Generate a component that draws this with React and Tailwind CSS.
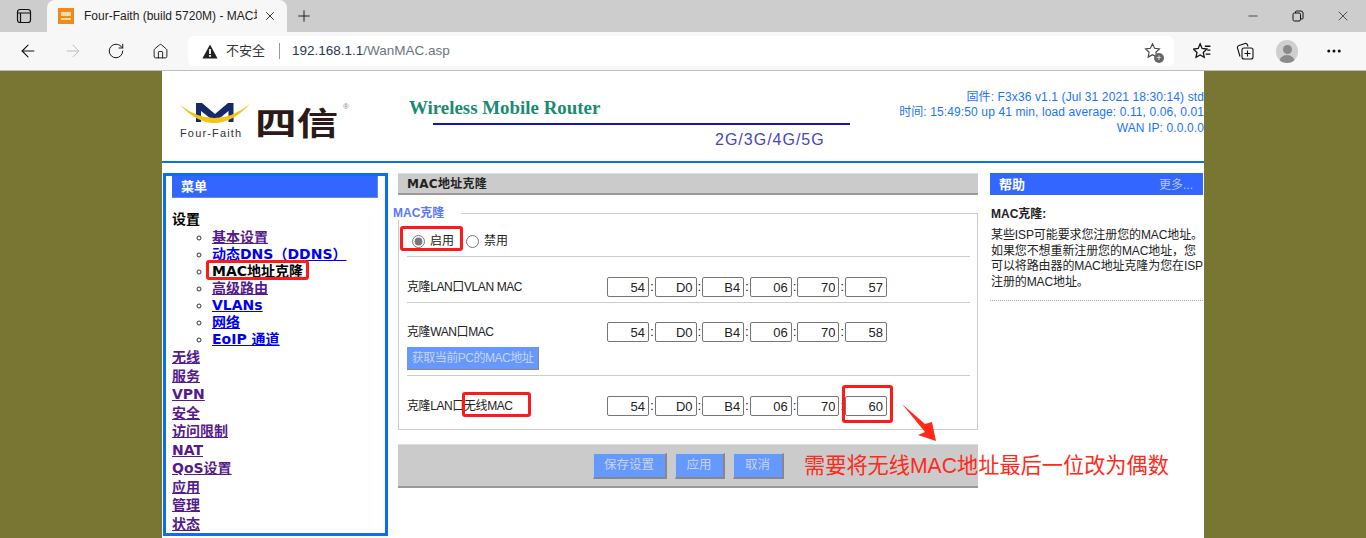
import React from "react";
import { ArrowLeft, ArrowRight, RotateCw, House, Minus, X, Plus, Ellipsis } from "lucide-react";

const sans = "font-['Liberation_Sans','Noto_Sans_CJK_SC',sans-serif]";
const menuFont = "font-['DejaVu_Sans','Noto_Sans_CJK_SC',sans-serif]";

const subMenu = [
  { label: "基本设置", color: "text-[#551a8b]" },
  { label: "动态DNS（DDNS）", color: "text-[#0000ee]" },
  { label: "MAC地址克隆", color: "text-black", current: true },
  { label: "高级路由", color: "text-[#551a8b]" },
  { label: "VLANs", color: "text-[#0000ee]" },
  { label: "网络", color: "text-[#0000ee]" },
  { label: "EoIP 通道", color: "text-[#0000ee]" },
];

const topMenu = ["无线", "服务", "VPN", "安全", "访问限制", "NAT", "QoS设置", "应用", "管理", "状态"];

const Chrome = () => {
  return (
    <div className={`${sans} h-[71px] border-b border-[#bdbdbd]`}>
      <div className="relative flex h-[32px] items-end bg-[#cdcdcd]">
        <div className="flex h-[32px] w-[47px] items-center justify-center">
          <svg width="16" height="16" viewBox="0 0 16 16" fill="none" stroke="#111" strokeWidth="1.2">
            <rect x="1.5" y="1.5" width="13" height="13" rx="2.5" />
            <path d="M1.5 5h13M4.5 5v9.5" />
          </svg>
        </div>
        <div className="flex h-[32px] w-[240px] items-center rounded-t-lg bg-[#f7f7f7] pl-[11px]">
          <div className="flex h-[16px] w-[16px] flex-col items-center justify-center gap-[2px] bg-[#f08a1c]">
            <div className="h-[4px] w-[10px] bg-[#fbd9a8]" />
            <div className="h-[2px] w-[10px] bg-[#fbd9a8]" />
          </div>
          <div className="ml-[10px] w-[173px] overflow-hidden text-[12px] whitespace-nowrap text-[#222]">Four-Faith (build 5720M) - MAC地址克隆</div>
          <X size={14} strokeWidth={1.6} className="ml-[6px] text-[#222]" />
        </div>
        <div className="flex h-[32px] w-[34px] items-center justify-center">
          <Plus size={18} strokeWidth={1.2} className="text-[#111]" />
        </div>
        <div className="ml-auto flex h-[32px] items-center">
          <div className="flex w-[45px] justify-center"><Minus size={14} strokeWidth={1.2} className="text-[#111]" /></div>
          <div className="flex w-[45px] justify-center">
            <svg width="12" height="12" viewBox="0 0 12 12" fill="none" stroke="#111" strokeWidth="1">
              <rect x="1" y="3" width="7.5" height="8" rx="1.5" />
              <path d="M3.500 3V2a1 1 0 0 1 1-1h4.500a2 2 0 0 1 2 2v5a1 1 0 0 1-1 1H8.500" />
            </svg>
          </div>
          <div className="flex w-[46px] justify-center pr-[1px]"><X size={16} strokeWidth={1} className="text-[#111]" /></div>
        </div>
      </div>
      <div className="flex h-[38px] items-center bg-[#f7f7f7]">
        <div className="flex w-[188px] items-center">
          <div className="flex w-[56px] justify-center"><ArrowLeft size={20} strokeWidth={1.3} className="text-[#111]" /></div>
          <div className="flex w-[34px] justify-center"><ArrowRight size={20} strokeWidth={1.2} className="text-[#bbb]" /></div>
          <div className="flex w-[52px] justify-center"><RotateCw size={18} strokeWidth={1.3} className="text-[#111]" /></div>
          <div className="flex w-[36px] justify-center"><House size={17} strokeWidth={1.3} className="text-[#111]" /></div>
        </div>
        <div className="flex h-[30px] w-[986px] items-center rounded-md bg-white pl-[14px]">
          <svg width="16" height="15" viewBox="0 0 16 15">
            <path d="M8 .5 15.600 14.500H.4Z" fill="#222" />
            <rect x="7.100" y="5" width="1.800" height="5" fill="#fff" />
            <rect x="7.100" y="11" width="1.800" height="1.800" fill="#fff" />
          </svg>
          <span className="ml-[8px] text-[13px] text-[#333]">不安全</span>
          <span className="ml-[14px] h-[16px] w-px bg-[#999]" />
          <span className="ml-[12px] text-[13.500px] text-[#1f3a4d]">192.168.1.1</span>
          <span className="text-[13.500px] text-[#6b7580]">/WanMAC.asp</span>
          <div className="relative mr-[12px] ml-auto h-[18px] w-[18px]">
            <svg width="17" height="17" viewBox="0 0 24 24" fill="none" stroke="#444" strokeWidth="1.6">
              <path d="M12 2.500l3 6.300 6.800.9-5 4.800 1.300 6.800-6.100-3.300-6.100 3.300 1.300-6.800-5-4.800 6.800-.9z" />
            </svg>
            <div className="absolute right-[-2px] bottom-[-3px] flex h-[10px] w-[10px] items-center justify-center rounded-full bg-[#666] text-[9px] leading-none text-white">+</div>
          </div>
        </div>
        <div className="flex h-[30px] flex-1 items-center">
          <div className="flex w-[56px] justify-center">
            <svg width="19" height="18" viewBox="0 0 24 22" fill="none" stroke="#111" strokeWidth="1.6">
              <path d="M9 2l2.500 5.800 6 .7-4.500 4.300 1.200 6.200-5.200-3-5.200 3 1.200-6.200L.6 8.500l6-.7z" />
              <path d="M15 5h7M18 10h4M16 15h6" />
            </svg>
          </div>
          <div className="flex w-[30px] justify-center">
            <svg width="18" height="18" viewBox="0 0 18 18" fill="none" stroke="#111" strokeWidth="1.1">
              <rect x="6" y="6" width="11" height="11" rx="2" />
              <path d="M11.500 8.500v6M8.500 11.500h6" />
              <path d="M4 14.500 1.500 6a2 2 0 0 1 1.500-2.500L9 1.500a2 2 0 0 1 2.500 1.500l.5 1.500" />
            </svg>
          </div>
          <div className="ml-[16px] flex h-[23px] w-[22px] flex-col items-center justify-end overflow-hidden rounded-full bg-[#cfcfcf]">
            <div className="h-[9px] w-[9px] rounded-full bg-[#8a8a8a]" />
            <div className="mt-[1px] h-[8px] w-[16px] rounded-t-full bg-[#8a8a8a]" />
          </div>
          <div className="ml-[24px] flex w-[24px] justify-center"><Ellipsis size={18} strokeWidth={2} className="text-[#111]" /></div>
        </div>
      </div>
    </div>
  );
};

const Header = () => {
  return (
    <div className={`${sans} flex h-[92px] border-b-2 border-[#0a70e8]`}>
      <div className="w-[247px] pt-[32px] pl-[18px]">
        <div className="flex items-start">
          <div className="w-[75px]">
            <svg width="70" height="22" viewBox="0 0 70 22" className="block">
              <path d="M16 0h6l13 11L48 0h5.500v19h-5V8L35 19 21 8v11h-5Z" fill="#152a66" />
              <path d="M0 2Q35 38.500 70 1 35 28.500 0 2Z" fill="#f3c316" />
            </svg>
            <div className="mt-[3px] text-[11px] leading-[10px] tracking-[1.150px] whitespace-nowrap text-[#333]">Four-Faith</div>
          </div>
          <div className="mt-[2px] h-[32px] w-[85px] origin-left scale-x-[1.3] font-['Noto_Sans_CJK_SC',sans-serif] text-[32px] leading-[32px] font-bold whitespace-nowrap text-[#2b1a17]">四信</div>
          <div className="ml-[3px] text-[8px] leading-[8px] text-[#888]">®</div>
        </div>
      </div>
      <div className="w-[441px]">
        <div className="pt-[26px] font-['Liberation_Serif',serif] text-[18.900px] leading-[22px] font-bold text-[#1a8a72]">Wireless Mobile Router</div>
        <div className="mt-[4px] ml-[24px] h-[2px] bg-[#1c14b0]" />
        <div className="mt-[6px] pl-[306px] text-[16px] leading-[18px] tracking-[1px] text-[#4545c0]">2G/3G/4G/5G</div>
      </div>
      <div className="flex-1 overflow-hidden pt-[19px] text-right text-[12px] leading-[15.400px] tracking-[0.115px] whitespace-nowrap text-[#1a73ff]">
        <div>固件: F3x36 v1.1 (Jul 31 2021 18:30:14) std</div>
        <div>时间: 15:49:50 up 41 min, load average: 0.11, 0.06, 0.01</div>
        <div>WAN IP: 0.0.0.0</div>
      </div>
    </div>
  );
};

const Sidebar = () => {
  return (
    <div className={`${menuFont} ml-px h-[363px] w-[225px] border-[3px] border-[#0a70e8] px-[6px]`}>
      <div className="h-[22px] w-[206px] border-r border-b border-[#6f86d8] bg-[#3366ff] pl-[9px] text-[13px] leading-[21px] font-bold text-white">菜单</div>
      <div className="pt-[12px] text-[14px] font-bold">
        <div className="leading-[19px] text-black">设置</div>
        <ul className="list-[circle] pl-[40px] text-[14px] leading-[17px]">
          {subMenu.map((item) => (
            <li key={item.label} className="text-[#333]">
              {item.current ? (
                <span className={item.color}>{item.label}</span>
              ) : (
                <a className={`${item.color} underline`}>{item.label}</a>
              )}
            </li>
          ))}
        </ul>
        <div>
          {topMenu.map((item) => (
            <div key={item} className="h-[18.500px] leading-[18px]">
              <a className="text-[#551a8b] underline">{item}</a>
            </div>
          ))}
        </div>
      </div>
    </div>
  );
};

const MacRow = ({ values }) => {
  return (
    <div className="flex items-center">
      {values.map((value, index) => (
        <React.Fragment key={index}>
          {index > 0 && <span className="w-[5.600px] text-center text-[12px] leading-none text-black">:</span>}
          <input
            readOnly
            value={value}
            className="h-[20px] w-[42px] rounded-[2px] border border-[#767676] bg-white pr-[3px] text-right text-[13px] leading-none text-[#222] outline-none"
          />
        </React.Fragment>
      ))}
    </div>
  );
};

const Field = ({ label, values }) => {
  return (
    <div className="flex h-[20px] items-center">
      <div className="w-[200px] text-[12px] tracking-[-0.4px] whitespace-nowrap text-[#222]">{label}</div>
      <MacRow values={values} />
    </div>
  );
};

const saveButton = "h-[26px] border-t border-r-2 border-b-2 border-l border-t-[#bcd] border-r-[#888] border-b-[#888] border-l-[#bcd] bg-[#6699ff] text-[12.500px] text-[#c6d4f0]";

const Main = () => {
  return (
    <div className={`${sans} ml-[10px] w-[580px]`}>
      <div className={`${menuFont} h-[22px] border-t border-b-2 border-t-[#ddd] border-b-[#999] bg-[#cbcbcb] pl-[9px] text-[12px] leading-[21px] font-bold tracking-[0.3px] text-[#222]`}>MAC地址克隆</div>
      <fieldset className="mt-[11px] h-[224px] border border-[#ccc] pr-[7px] pl-[8px]">
        <legend className="-ml-[14px] pr-[17px] text-[12px] leading-[14px] font-bold text-[#5a78ff]">MAC克隆</legend>
        <div className="flex h-[37px] items-start border-b border-[#ccc] pt-[12px] text-[12px] text-[#222]">
          <label className="ml-[5px] flex items-center">
            <input type="radio" name="clone" defaultChecked className="h-[13px] w-[13px] accent-[#777]" />
            <span className="ml-[5px]">启用</span>
          </label>
          <label className="ml-[12px] flex items-center">
            <input type="radio" name="clone" className="h-[13px] w-[13px]" />
            <span className="ml-[5px]">禁用</span>
          </label>
        </div>
        <div className="h-[46px] border-b border-[#ccc] pt-[20px]">
          <Field label="克隆LAN口VLAN MAC" values={["54", "D0", "B4", "06", "70", "57"]} />
        </div>
        <div className="h-[73px] border-b border-[#ccc] pt-[19px]">
          <Field label="克隆WAN口MAC" values={["54", "D0", "B4", "06", "70", "58"]} />
          <button className="mt-[5px] block h-[23px] w-[132px] border-r border-b border-[#888] bg-[#6699ff] text-[12px] tracking-[-0.5px] text-[#c6d4f0]">获取当前PC的MAC地址</button>
        </div>
        <div className="pt-[20px]">
          <Field label="克隆LAN口无线MAC" values={["54", "D0", "B4", "06", "70", "60"]} />
        </div>
      </fieldset>
      <div className="mt-[14px] flex h-[44px] items-center justify-center gap-[8px] border-t border-b-2 border-t-[#ddd] border-b-[#999] bg-[#cbcbcb]">
        <button className={`${saveButton} w-[74px]`}>保存设置</button>
        <button className={`${saveButton} w-[50px]`}>应用</button>
        <button className={`${saveButton} w-[51px]`}>取消</button>
      </div>
    </div>
  );
};

const Help = () => {
  return (
    <div className={`${sans} ml-[12px] w-[213px]`}>
      <div className="flex h-[22px] items-center justify-between bg-[#3366ff] pt-[1px] pr-[10px] pl-[9px] text-[12px]">
        <span className="text-[13px] font-bold text-white">帮助</span>
        <span className="text-[#b5c6f5]">更多...</span>
      </div>
      <div className="border-b border-dotted border-[#aaa] pt-[11px] pb-[9px] pl-px text-[12px] text-[#222]">
        <div className="leading-[16px] font-bold">MAC克隆:</div>
        <p className="mt-[6px] leading-[15.700px] tracking-[-0.1px] whitespace-nowrap">
          某些ISP可能要求您注册您的MAC地址。<br />
          如果您不想重新注册您的MAC地址，您<br />
          可以将路由器的MAC地址克隆为您在ISP<br />
          注册的MAC地址。
        </p>
      </div>
    </div>
  );
};

// red markup drawn on top of the screenshot
const Annotations = () => {
  const box = "absolute rounded-[3px] border-[3px] border-[#ff1a1a]";
  return (
    <>
      <div className={`${box} top-[260px] left-[206px] h-[20px] w-[103px]`} />
      <div className={`${box} top-[226px] left-[400px] h-[25px] w-[63px]`} />
      <div className={`${box} top-[392px] left-[462px] h-[25px] w-[69px]`} />
      <div className={`${box} top-[385px] left-[842px] h-[38px] w-[51px]`} />
      <svg width="40" height="42" viewBox="0 0 40 42" className="absolute top-[402px] left-[900px]">
        <path d="M2 2 25 22 32 20 36 39 18 33 25 30Z" fill="#ff2a1a" />
      </svg>
      <div className={`${sans} absolute top-[452px] left-[804px] text-[21.200px] leading-[28px] whitespace-nowrap text-[#ff2a1a]`}>需要将无线MAC地址最后一位改为偶数</div>
    </>
  );
};

const App = () => {
  return (
    <div className="relative h-[538px] w-[1366px] overflow-hidden bg-[#787632]">
      <Chrome />
      <div className="mx-auto h-[467px] w-[1042px] bg-white">
        <Header />
        <div className="flex pt-[10px]">
          <Sidebar />
          <Main />
          <Help />
        </div>
      </div>
      <Annotations />
    </div>
  );
};

export default App;
